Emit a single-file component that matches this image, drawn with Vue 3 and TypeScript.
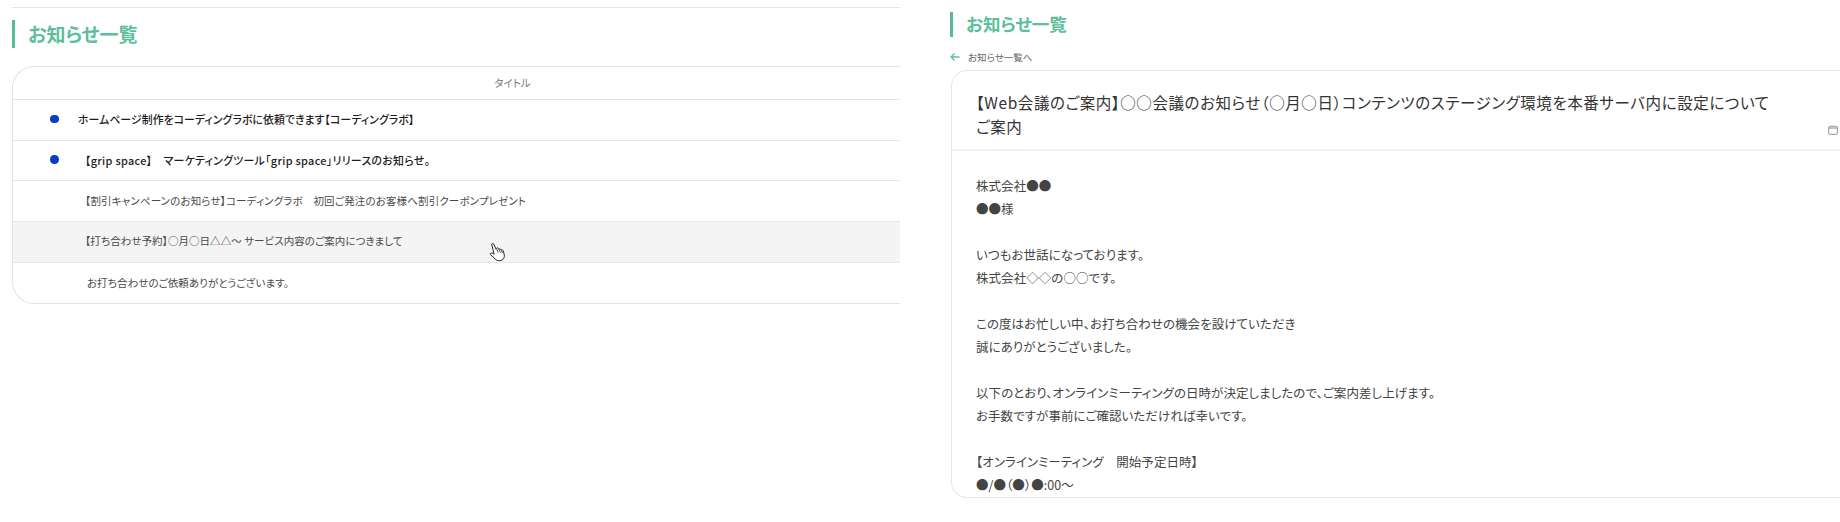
<script setup lang="ts">
interface Row { text: string; unread: boolean; tone: string; indent: string }
const rows: Row[] = [
  { text: 'ホームページ制作をコーディングラボに依頼できます【コーディングラボ】', unread: true, tone: 'strong', indent: 'i0' },
  { text: '【grip space】　マーケティングツール「grip space」リリースのお知らせ。', unread: true, tone: 'strong', indent: 'i1 wide' },
  { text: '【割引キャンペーンのお知らせ】コーディングラボ　初回ご発注のお客様へ割引クーポンプレゼント', unread: false, tone: 'plain', indent: 'i1 loose' },
  { text: '【打ち合わせ予約】○月○日△△〜 サービス内容のご案内につきまして', unread: false, tone: 'plain hover', indent: 'i1' },
  { text: 'お打ち合わせのご依頼ありがとうございます。', unread: false, tone: 'plain', indent: 'i2' },
]
const blocks: string[][] = [
  ['株式会社●●', '●●様'],
  ['いつもお世話になっております。', '株式会社◇◇の○○です。'],
  ['この度はお忙しい中、お打ち合わせの機会を設けていただき', '誠にありがとうございました。'],
  ['以下のとおり、オンラインミーティングの日時が決定しましたので、ご案内差し上げます。', 'お手数ですが事前にご確認いただければ幸いです。'],
  ['【オンラインミーティング　開始予定日時】', '●/●（●）●:00〜'],
]
</script>

<template>
  <div class="page">
    <section class="list-panel">
      <h2 class="heading heading-list">お知らせ一覧</h2>
      <div class="table">
        <div class="thead">タイトル</div>
        <div v-for="(r, i) in rows" :key="i" class="row" :class="r.tone">
          <span class="dot-col"><span v-if="r.unread" class="dot"></span></span>
          <span class="row-text" :class="r.indent">{{ r.text }}</span>
        </div>
      </div>
      <svg class="cursor" viewBox="0 0 18 20" width="18" height="20" aria-hidden="true">
        <path d="M3.2 1.6c.7-.4 1.3 0 1.7.8l2.3 5 .2-1c.5-.9 1.5-.8 2 .1l.4.9c.4-.9 1.4-.9 1.9 0l.3.7c.5-.7 1.4-.5 1.8.3 1 2.1 1.7 4.300 1.500 6.200-.2 2.300-1.900 3.800-4.200 4-2.200.2-3.700-.3-5-1.700-1.300-1.300-2.900-3-4.600-4.200-.6-.5-.4-1.300.3-1.500 1.100-.3 2.200.2 3.300 1L2.900 3c-.3-.6-.2-1.100.3-1.400z" fill="#fff" stroke="#222" stroke-width="1" stroke-linejoin="round"/>
        <path d="M8 7.500l1.100 3M10.300 7.500l1.100 3M12.500 8.500l1 2.500" fill="none" stroke="#222" stroke-width=".8"/>
      </svg>
    </section>

    <section class="detail-panel">
      <h2 class="heading heading-detail">お知らせ一覧</h2>
      <a class="back">
        <svg viewBox="0 0 10 10" width="10" height="10" aria-hidden="true">
          <path d="M9.500 5H1M4.500 1.500L1 5l3.500 3.500" fill="none" stroke="#5cc09a" stroke-width="1.300"/>
        </svg>
        <span>お知らせ一覧へ</span>
      </a>
      <article class="card">
        <header class="card-head">
          <h1 class="card-title">【Web会議のご案内】○○会議のお知らせ（○月○日）コンテンツのステージング環境を本番サーバ内に設定についてご案内</h1>
          <svg class="cal" viewBox="0 0 10 10" width="10" height="10" aria-hidden="true">
            <rect x=".7" y="1.300" width="8.600" height="8" rx="1" fill="none" stroke="#8a8a8a" stroke-width=".9"/>
            <path d="M.7 3h8.600" stroke="#8a8a8a" stroke-width="1"/>
          </svg>
        </header>
        <div class="card-body">
          <div v-for="(b, i) in blocks" :key="i" class="block">
            <div v-for="(l, j) in b" :key="j" class="line">{{ l }}</div>
          </div>
        </div>
      </article>
    </section>
  </div>
</template>

<style>
html, body { margin: 0; background: #fff; }
</style>

<style scoped>
.page {
  display: flex;
  width: 1840px;
  height: 522px;
  overflow: hidden;
  background: #fff;
  font-family: "Noto Sans CJK JP", "Noto Sans", sans-serif;
  font-feature-settings: "palt";
  color: #333;
}
.list-panel {
  position: relative;
  width: 888px;
  margin-left: 12px;
  margin-right: 50px;
  margin-top: 7px;
  border-top: 1px solid #e6e6e6;
  box-sizing: border-box;
  height: 300px;
  flex: none;
}
.heading {
  margin: 0;
  border-left: 3px solid #56bd93;
  color: #5cc09a;
  font-weight: 700;
  display: flex;
  align-items: center;
}
.heading-list {
  margin-top: 12px;
  height: 28px;
  padding-left: 13px;
  padding-bottom: 2px;
  box-sizing: border-box;
  font-size: 19px;
}
.table {
  margin-top: 18px;
  border: 1px solid #e3e3e3;
  border-right: none;
  border-radius: 22px 0 0 22px;
  overflow: hidden;
}
.thead {
  height: 33px;
  box-sizing: border-box;
  border-bottom: 1px solid #e6e6e6;
  display: flex;
  align-items: center;
  justify-content: center;
  font-size: 10.500px;
  color: #777;
  padding-left: 112px;
  padding-bottom: 2px;
}
.row {
  height: 40.700px;
  box-sizing: border-box;
  border-bottom: 1px solid #e8e8e8;
  display: flex;
  align-items: center;
  padding-bottom: 2px;
}
.row:last-child { border-bottom: none; }
.row.hover { background: #f4f4f4; }
.row-text { font-size: 10.500px; letter-spacing: .05px; }
.strong .row-text { color: #1d1d1d; font-weight: 500; font-size: 10.900px; }
.plain .row-text { color: #4a4a4a; }
.row-text.wide { letter-spacing: .3px; }
.row-text.loose { letter-spacing: .15px; }
.dot-col {
  width: 65px;
  flex: none;
  display: flex;
  padding-left: 37px;
  box-sizing: border-box;
}
.dot {
  width: 8.500px;
  height: 8.500px;
  border-radius: 50%;
  background: #0b3cc4;
}
.i0 { margin-left: 0; }
.i1 { margin-left: 7px; }
.i2 { margin-left: 9px; }
.cursor {
  position: absolute;
  left: 477px;
  top: 234px;
}
.detail-panel {
  flex: 1;
  min-width: 0;
  display: flex;
  flex-direction: column;
}
.heading-detail {
  margin-top: 12px;
  height: 25px;
  padding-left: 13px;
  font-size: 17.500px;
  line-height: 23px;
  align-items: flex-start;
}
.back {
  display: flex;
  align-items: center;
  gap: 8px;
  margin-top: 14px;
  height: 12px;
  font-size: 9.500px;
  color: #666;
}
.card {
  margin-top: 7px;
  margin-left: 1px;
  height: 428px;
  box-sizing: border-box;
  border: 1px solid #e6e6e6;
  border-right: none;
  border-radius: 16px 0 0 16px;
  overflow: hidden;
}
.card-head {
  display: flex;
  align-items: flex-end;
  justify-content: space-between;
  height: 80px;
  box-sizing: border-box;
  padding: 20px 2px 11px 24px;
  border-bottom: 2px solid #f0f0f0;
}
.card-title {
  margin: 0;
  width: 805px;
  font-size: 15.500px;
  font-weight: 400;
  line-height: 23.500px;
  letter-spacing: .58px;
  color: #333;
}
.cal { margin-bottom: 3px; }
.card-body {
  padding: 23px 24px 0;
  font-size: 12.500px;
  line-height: 23px;
  letter-spacing: .05px;
  color: #444;
}
.block + .block { margin-top: 23px; }
</style>
